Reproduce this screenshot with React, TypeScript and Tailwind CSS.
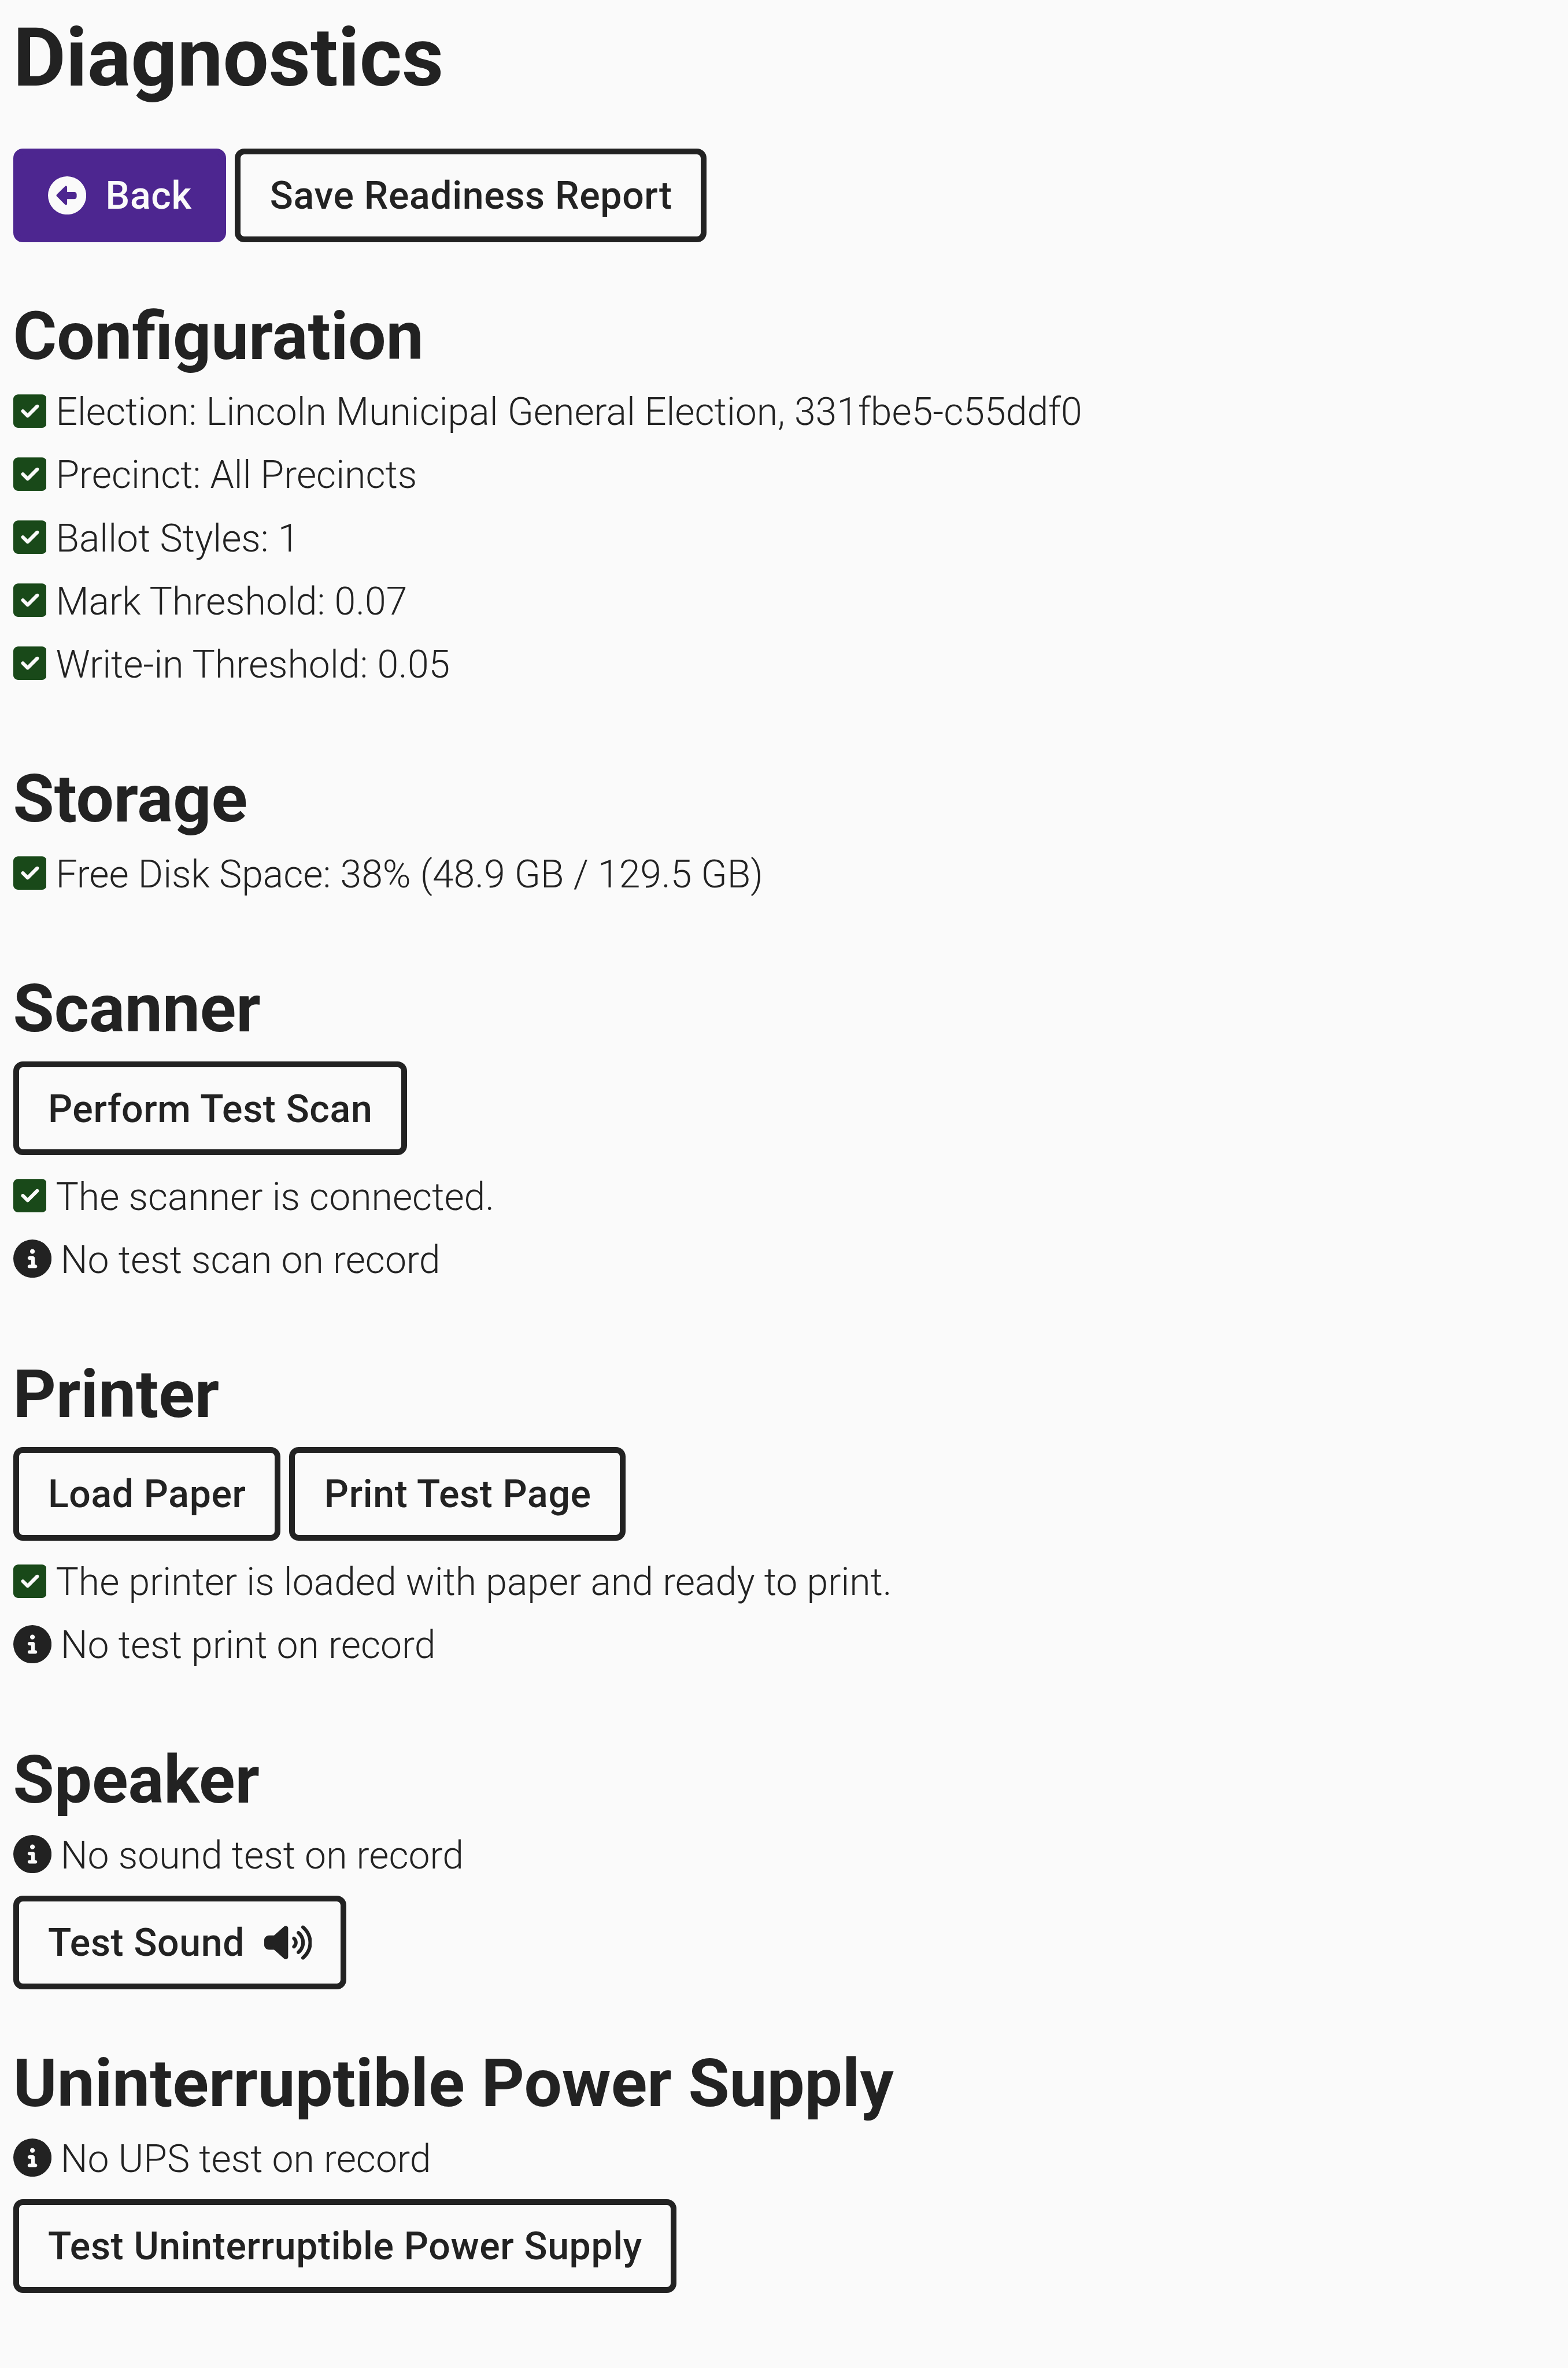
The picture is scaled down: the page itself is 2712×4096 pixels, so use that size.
import type { ReactNode } from "react";
import { FaCircleInfo, FaCircleLeft, FaSquareCheck, FaVolumeHigh } from "react-icons/fa6";

function Button({
  children,
  icon,
  rightIcon,
  primary = false,
}: {
  children: ReactNode;
  icon?: ReactNode;
  rightIcon?: ReactNode;
  primary?: boolean;
}) {
  const color = primary
    ? "border-[#4d2690] bg-[#4d2690] text-[#fafafa]"
    : "border-[#222222] bg-[#fafafa] text-[#222222]";
  return (
    <button
      type="button"
      className={`flex h-[162.2px] items-center gap-[33.5px] whitespace-nowrap rounded-[16.5px] border-[10px] pl-[50.4px] pr-[49.5px] text-[66.16px] font-medium tracking-[0.66px] ${color}`}
    >
      {icon}
      <span className="pt-[2px]">{children}</span>
      {rightIcon}
    </button>
  );
}

function ButtonRow({ children }: { children: ReactNode }) {
  return <div className="flex gap-[15.3px]">{children}</div>;
}

function Status({ children, info = false }: { children: ReactNode; info?: boolean }) {
  return (
    <p className="mb-[29.8px] flex h-[79.4px] items-start gap-[16px] whitespace-nowrap">
      {info ? (
        <FaCircleInfo className="mt-[4.4px] h-[66.16px] w-[66.16px] shrink-0" />
      ) : (
        <FaSquareCheck className="mt-[4.4px] h-[66.16px] w-[57.89px] shrink-0 text-[#194919]" />
      )}
      <span>{children}</span>
    </p>
  );
}

function Section({ title, children }: { title: string; children: ReactNode }) {
  return (
    <section className="mt-[94.1px]">
      <h2 className="mb-[21px] h-[138.9px] whitespace-nowrap text-[115.78px] font-bold leading-[138.9px]">
        {title}
      </h2>
      {children}
    </section>
  );
}

export default function App() {
  return (
    <main className="flex h-[4096px] w-[2712px] flex-col overflow-hidden bg-[#fafafa] px-[22.5px] pt-[16.4px] font-['Roboto',sans-serif] text-[66.1px] font-light leading-[79.4px] text-[#222222]">
      <h1 className="mb-[71.9px] h-[168.7px] text-[140.6px] font-bold leading-[168.7px]">
        Diagnostics
      </h1>
      <ButtonRow>
        <Button primary icon={<FaCircleLeft className="size-[66.16px]" />}>
          Back
        </Button>
        <Button>Save Readiness Report</Button>
      </ButtonRow>

      <Section title="Configuration">
        <Status>Election: Lincoln Municipal General Election, 331fbe5-c55ddf0</Status>
        <Status>Precinct: All Precincts</Status>
        <Status>Ballot Styles: 1</Status>
        <Status>Mark Threshold: 0.07</Status>
        <Status>Write-in Threshold: 0.05</Status>
      </Section>

      <Section title="Storage">
        <Status>Free Disk Space: 38% (48.9 GB / 129.5 GB)</Status>
      </Section>

      <Section title="Scanner">
        <div className="mb-[32.1px]">
          <ButtonRow>
            <Button>Perform Test Scan</Button>
          </ButtonRow>
        </div>
        <Status>The scanner is connected.</Status>
        <Status info>No test scan on record</Status>
      </Section>

      <Section title="Printer">
        <div className="mb-[32.1px]">
          <ButtonRow>
            <Button>Load Paper</Button>
            <Button>Print Test Page</Button>
          </ButtonRow>
        </div>
        <Status>The printer is loaded with paper and ready to print.</Status>
        <Status info>No test print on record</Status>
      </Section>

      <Section title="Speaker">
        <Status info>No sound test on record</Status>
        <ButtonRow>
          <Button rightIcon={<FaVolumeHigh className="h-[66.16px] w-[82.7px]" />}>Test Sound</Button>
        </ButtonRow>
      </Section>

      <Section title="Uninterruptible Power Supply">
        <Status info>No UPS test on record</Status>
        <ButtonRow>
          <Button>Test Uninterruptible Power Supply</Button>
        </ButtonRow>
      </Section>
    </main>
  );
}
